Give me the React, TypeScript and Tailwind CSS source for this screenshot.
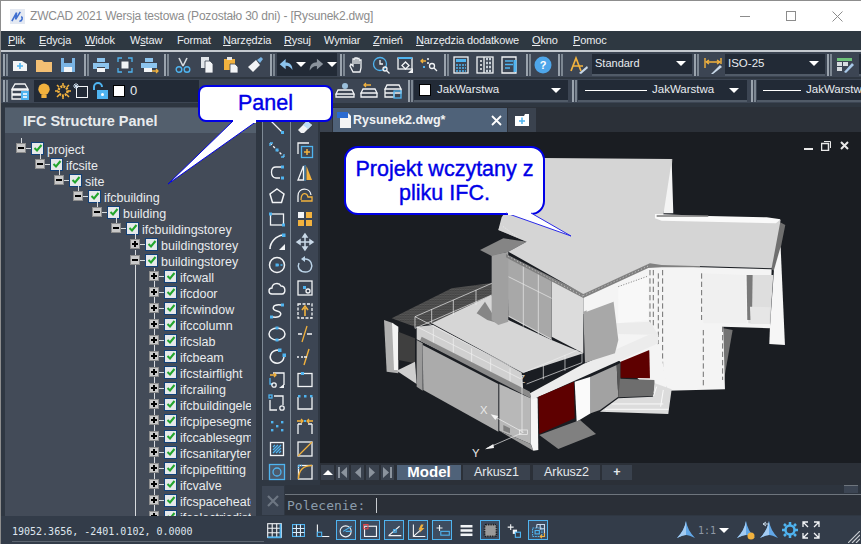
import React from 'react';

const W = '#f2f4f6';
const B = '#4fb4f0';
const O = '#f2b23e';

const Ic = ({ children, s = 20 }: { children: React.ReactNode; s?: number }) => (
  <svg viewBox="0 0 20 20" width={s} height={s} fill="none" stroke={W} strokeWidth="1.3">
    {children}
  </svg>
);

const Btn = ({ children, h = 'h-[25px]' }: { children: React.ReactNode; h?: string }) => (
  <div className={`w-[24px] ${h} flex items-center justify-center shrink-0`}>{children}</div>
);

const Grip = ({ className = '' }: { className?: string }) => (
  <div className={`w-[5px] h-[22px] shrink-0 flex justify-between ${className}`}>
    <div className="w-[2px] bg-[#9aa3ad]" />
    <div className="w-[2px] bg-[#7d8792]" />
  </div>
);

const Caret = () => (
  <div className="w-0 h-0 border-l-[5px] border-r-[5px] border-t-[5px] border-l-transparent border-r-transparent border-t-white" />
);

const Combo = ({ children, className }: { children: React.ReactNode; className: string }) => (
  <div className={`h-[22px] bg-[#222a36] border-b-2 border-[#515b68] flex items-center shrink-0 font-['Liberation_Sans',sans-serif] text-[11.5px] text-[#e8ecf0] ${className}`}>
    {children}
  </div>
);

const menu: [string, string, string, string][] = [
  ['', 'P', 'lik', 'w-[31px]'],
  ['', 'E', 'dycja', 'w-[46px]'],
  ['', 'W', 'idok', 'w-[45px]'],
  ['W', 's', 'taw', 'w-[47px]'],
  ['', '', 'Format', 'w-[46px]'],
  ['', 'N', 'arzędzia', 'w-[61px]'],
  ['', 'R', 'ysuj', 'w-[40px]'],
  ['', '', 'Wymiar', 'w-[49px]'],
  ['', 'Z', 'mień', 'w-[43px]'],
  ['', 'N', 'arzędzia dodatkowe', 'w-[116px]'],
  ['', 'O', 'kno', 'w-[41px]'],
  ['', 'P', 'omoc', 'w-[50px]'],
];

const tree: [string, number, boolean][] = [
  ['project', 0, false],
  ['ifcsite', 1, false],
  ['site', 2, false],
  ['ifcbuilding', 3, false],
  ['building', 4, false],
  ['ifcbuildingstorey', 5, false],
  ['buildingstorey', 6, true],
  ['buildingstorey', 6, false],
  ['ifcwall', 7, true],
  ['ifcdoor', 7, true],
  ['ifcwindow', 7, true],
  ['ifccolumn', 7, true],
  ['ifcslab', 7, true],
  ['ifcbeam', 7, true],
  ['ifcstairflight', 7, true],
  ['ifcrailing', 7, true],
  ['ifcbuildingelementproxy', 7, true],
  ['ifcpipesegment', 7, true],
  ['ifccablesegment', 7, true],
  ['ifcsanitaryterminal', 7, true],
  ['ifcpipefitting', 7, true],
  ['ifcvalve', 7, true],
  ['ifcspaceheater', 7, true],
  ['ifcelectricdistribution', 7, true],
];

const TreeRow = ({ name, level, plus, index }: { name: string; level: number; plus: boolean; index: number }) => (
  <div className="relative h-[16px] flex items-center whitespace-nowrap" style={{ paddingLeft: 11 + 19 * level }}>
    {level === 7 && <span className="absolute left-[130px] top-0 bottom-0 w-px bg-[#d8dbde]" />}
    {level === 7 && <span className="absolute left-[149px] top-0 bottom-0 w-px bg-[#d8dbde]" />}
    {index === 7 && <span className="absolute left-[130px] top-[8px] bottom-0 w-px bg-[#d8dbde]" />}
    {level < 7 && <span className="absolute top-[-2px] h-[5px] w-px bg-[#d8dbde]" style={{ left: 16 + 19 * level }} />}
    <span className="relative w-[10px] h-[10px] bg-[#c8c8c8] border border-[#8c8c8c] shrink-0 flex items-center justify-center">
      <span className="absolute w-[6px] h-[2px] bg-black" />
      {plus && <span className="absolute w-[2px] h-[6px] bg-black" />}
    </span>
    <span className="w-[5px] h-px bg-[#d8dbde] shrink-0" />
    <span className="w-[13px] h-[13px] bg-[#e6e8ea] border border-[#12427a] shrink-0 flex items-center justify-center">
      <svg viewBox="0 0 10 10" width="10" height="10" fill="none" stroke="#22a52c" strokeWidth="2">
        <path d="M1.5 5 L4 7.5 L8.5 2" />
      </svg>
    </span>
    <span className="ml-[3px] pt-[3px] text-[12.5px] text-[#e9ebee] font-['Liberation_Sans',sans-serif] leading-[16px]">{name}</span>
  </div>
);

const col1: React.ReactNode[] = [
  <><path d="M4 4 L15 15" /><rect x="14" y="14" width="3" height="3" fill={B} stroke="none" /></>,
  <><path d="M3 3 L17 17" strokeDasharray="2.5 2" /><path d="M3 3 h3 M3 3 v3 M17 17 h-3 M17 17 v-3" stroke={B} /><rect x="8.5" y="8.5" width="3" height="3" fill={B} stroke="none" /></>,
  <><path d="M15 4 H9 C3 4 3 14 9 15 H13" /><rect x="14" y="2.5" width="3" height="3" fill={B} stroke="none" /><rect x="14" y="13.5" width="3" height="3" fill={B} stroke="none" /></>,
  <path d="M10 3 L17 8 L14.5 16.5 H5.5 L3 8 Z" strokeWidth="1.5" />,
  <><rect x="3.5" y="5" width="13" height="11" /><rect x="2" y="3.5" width="3" height="3" fill={B} stroke="none" /><rect x="15" y="14.5" width="3" height="3" fill={B} stroke="none" /></>,
  <><path d="M3 17 C3 10 9 4 16 3" strokeWidth="1.6" /><rect x="15" y="1.5" width="3.5" height="3.5" fill={B} stroke="none" /><path d="M18 12 V18 H12 Z" fill={W} stroke="none" /></>,
  <><circle cx="10" cy="10" r="7.5" strokeWidth="1.5" /><path d="M10 10 H17" stroke={B} strokeDasharray="2 1.5" /><rect x="8.5" y="8.5" width="3" height="3" fill={B} stroke="none" /></>,
  <path d="M5 16 C1 16 1 10 5 10 C5 5 12 4 14 8 C19 8 19 16 15 16 Z" strokeWidth="1.4" />,
  <><path d="M14 4 C5 3 4 9 10 10 C16 11 15 17 6 16" strokeWidth="1.5" /><rect x="14" y="2.5" width="3" height="3" fill={B} stroke="none" /><rect x="3" y="14.5" width="3" height="3" fill={B} stroke="none" /></>,
  <><ellipse cx="10" cy="10" rx="8" ry="6" strokeWidth="1.5" /><rect x="8.5" y="2.5" width="3" height="3" fill={B} stroke="none" /><rect x="8.5" y="14.5" width="3" height="3" fill={B} stroke="none" /></>,
  <><path d="M12 3 C3 3 1 11 6 15 C11 18 17 15 17 9" strokeWidth="1.5" /><rect x="11" y="1.5" width="3.5" height="3.5" fill={B} stroke="none" /><rect x="15.5" y="6.5" width="3.5" height="3.5" fill={B} stroke="none" /></>,
  <><path d="M6 3 H17 V15" /><path d="M3 8 V14 H6" stroke={B} /><path d="M3 5 H9 M7 3 L9 5 L7 7" stroke={O} /><circle cx="7" cy="15" r="2.2" /><path d="M17 14 V18 H12 Z" fill={W} stroke="none" /></>,
  <><path d="M3 7 V17 H10 M7 3 H16 V12" /><rect x="2" y="2" width="3" height="3" stroke={B} /><circle cx="15" cy="15" r="2.2" /></>,
  <g fill={B} stroke="none"><rect x="4" y="5" width="2.4" height="2.4" /><rect x="9" y="9" width="2.4" height="2.4" /><rect x="14" y="5" width="2.4" height="2.4" /><rect x="4" y="13" width="2.4" height="2.4" /><rect x="14" y="13" width="2.4" height="2.4" /></g>,
  <><rect x="3.5" y="3.5" width="13" height="13" /><path d="M6 14 L14 6 M6 11 L11 6 M9 14 L14 9" stroke={B} strokeWidth="1.4" /><path d="M6 8 L8 6 M12 14 L14 12" stroke={B} /></>,
  <><rect x="2.5" y="2.5" width="15" height="15" stroke={B} fill="#4c5a6c" /><circle cx="10" cy="10" r="4" stroke={B} /></>,
];

const col2: React.ReactNode[] = [
  <><path d="M3 13 L12 4 L17 8 L9 16 H6 Z" fill={W} stroke="none" /><path d="M12 4 L17 8 L13 12 L8 8 Z" fill="#bcdcf4" stroke="none" /></>,
  <><path d="M3 14 V3 H14" /><rect x="6.5" y="6.5" width="11" height="11" stroke={B} /><path d="M12 9 V15 M9 12 H15" stroke={O} strokeWidth="1.5" /></>,
  <><path d="M8.5 3 V17 H3 Z" /><path d="M11.5 3 V17 H17 Z" fill={O} stroke="none" /><path d="M10 2 V18" stroke={B} strokeWidth="0.8" /></>,
  <><path d="M3 16 V10 C3 1 15 1 16 9" /><path d="M6 14 C6 6 12 6 13 11 H17 V15 H6" stroke={O} /></>,
  <g stroke="none"><rect x="3" y="3" width="6" height="6" fill={W} /><rect x="11" y="3" width="6" height="6" fill={O} /><rect x="3" y="11" width="6" height="6" fill={O} /><rect x="11" y="11" width="6" height="6" fill={O} /></g>,
  <path d="M10 2 V18 M2 10 H18 M10 2 L8 5 H12 Z M10 18 L8 15 H12 Z M2 10 L5 8 V12 Z M18 10 L15 8 V12 Z" strokeWidth="1.5" stroke="#c9d9e8" fill="#c9d9e8" />,
  <><path d="M10 4 C16 4 18 10 16 14 C14 18 7 18 4 14 C3 12 3 10 4 8" stroke="#bcd4e8" strokeWidth="1.5" /><path d="M10 1 L6 4 L10 7 Z" fill="#bcd4e8" stroke="none" /></>,
  <><rect x="3" y="3" width="14" height="14" /><rect x="8" y="8" width="3" height="3" fill={B} stroke="none" /><circle cx="13" cy="13" r="2" /></>,
  <><rect x="3" y="3" width="14" height="14" strokeDasharray="3 1.5" /><path d="M10 15 V7 M7 9 L10 5 L13 9" stroke={O} strokeWidth="1.6" /></>,
  <><path d="M12 2 L7 18" stroke={O} strokeWidth="1.3" /><path d="M3 10 H7 M12 10 H17" stroke={W} /></>,
  <><path d="M14 2 L9 18" stroke={O} strokeWidth="1.4" /><path d="M2 10 H4 M6 10 H8 M9 10 H12" stroke={W} /></>,
  <><rect x="3" y="3.5" width="14" height="13" /><rect x="6" y="2" width="3" height="3" fill={B} stroke="none" /></>,
  <><path d="M3 4 V16 H17 V4" /><g fill={B} stroke="none"><rect x="3" y="2" width="2.5" height="2.5" /><rect x="9" y="2" width="2.5" height="2.5" /><rect x="15" y="2" width="2.5" height="2.5" /></g></>,
  <><path d="M3 18 V8 M17 18 V8 M3 8 H7 M13 8 H17" /><path d="M2 5 H8 M6 3 L8 5 L6 7 M18 5 H12 M14 3 L12 5 L14 7" stroke={O} /><rect x="9" y="4" width="2" height="2" fill={B} stroke="none" /></>,
  <><rect x="3" y="3" width="14" height="14" /><path d="M3 17 L17 3" stroke={O} strokeWidth="1.3" /></>,
  <><rect x="3.5" y="3.5" width="13.5" height="13.5" /><path d="M3.5 17 C3.5 8 9 3.5 17 3.5" stroke={O} strokeWidth="1.5" fill="#3f4855" /><path d="M3.5 3.5 H7 M3.5 3.5 V7" stroke={B} strokeDasharray="1.5 1" /></>,
];

const status: [React.ReactNode, boolean][] = [
  [<><rect x="2" y="2" width="16" height="16" stroke={W} /><path d="M2 7.3 H18 M2 12.6 H18 M7.3 2 V18 M12.6 2 V18" /><path d="M17 2 V18 H2" stroke={B} strokeWidth="2" /></>, false],
  [<g stroke={B}><rect x="3" y="3" width="14" height="14" /><path d="M3 7.6 H17 M3 12.3 H17 M7.6 3 V17 M12.3 3 V17" stroke="#d8ecfa" /></g>, false],
  [<><path d="M4 3 V17 H18" /><rect x="4" y="12" width="5" height="5" stroke={B} /></>, false],
  [<><circle cx="9" cy="11" r="6.5" /><path d="M6 11 L16 5 M9 11 H16" stroke={B} /></>, true],
  [<><rect x="3" y="5" width="14" height="12" /><rect x="2" y="3" width="5" height="5" stroke="#e0454b" /></>, true],
  [<><path d="M3 16 L16 5 M3 16 H18" /><rect x="9" y="9" width="3" height="3" stroke={B} /></>, true],
  [<><path d="M4 3 V17 H18 M4 17 L13 9" /><path d="M13 3 L10 9 H13 L11 13 L17 7 H14 L16 3 Z" fill={O} stroke="none" /></>, true],
  [<><path d="M3 7 H10 M6.5 3.5 V10.5" /><rect x="8" y="11" width="10" height="4.5" stroke={B} /></>, true],
  [<g stroke="none" fill={W}><rect x="3" y="3.5" width="14" height="3" /><rect x="3" y="8.5" width="14" height="3" /><rect x="3" y="13.5" width="14" height="3" /></g>, false],
  [<><rect x="3" y="3" width="14" height="14" rx="2" fill="#9a9a9a" stroke="#111" strokeDasharray="1 1" strokeWidth="2" /></>, true],
  [<><path d="M2 6 H9 M5.5 2.5 V9.5" /><rect x="8" y="9" width="5" height="5" fill={W} stroke="none" /><rect x="11" y="12" width="6" height="6" stroke={B} fill="#333c49" /></>, false],
  [<><g stroke={B}><rect x="3" y="7" width="11" height="10" strokeDasharray="2 1" /><rect x="6" y="10" width="5" height="4" /></g><path d="M8 3 H17 V14 M8 7 V3 M12 3 V9 M17 8 H12" stroke="#c8dcf0" /><path d="M17 13 V17 H12 M14 15 L12 17 L14 19" stroke={O} /></>, true],
];

const Anno = ({ badge }: { badge?: React.ReactNode }) => (
  <svg viewBox="0 0 20 20" width="20" height="20">
    <path d="M10 1 C11 7 14 13 19 18 C15 16 12 15 10 15 C8 15 5 16 1 18 C6 13 9 7 10 1 Z" fill="#62a8e8" />
    <path d="M10 1 V15 C8 15 5 16 1 18 C6 13 9 7 10 1 Z" fill="#a4ccf2" />
    {badge}
  </svg>
);

const Building = () => (
  <svg viewBox="320 132 541 331" className="w-full h-full block">
    <defs>
      <pattern id="hatch" width="5" height="5" patternUnits="userSpaceOnUse">
        <rect width="5" height="5" fill="#3a3a3a" />
        <path d="M0 4 L5 2" stroke="#777" strokeWidth="1.5" />
      </pattern>
    </defs>
    <g transform="translate(370 180) scale(0.3333)">
      {/* dach */}
      <polygon points="895,-60 908,-63 890,85 875,85" fill="#757575" />
      <polygon points="885,-20 905,-60 910,100 880,100" fill="#f4f4f4" />
      <polygon points="875,-10 895,-60 880,90 866,90" fill="#777" />
      <polygon points="1218,120 1246,135 1218,275 1205,268" fill="#6f6f6f" />
      {/* prawa czesc */}
      <polygon points="1212,270 1232,200 1245,495 1198,492 1200,440" fill="#f6f6f6" />
      <polygon points="1060,445 1088,450 1062,600 1055,600" fill="#737373" />
      <polygon points="640,350 840,255 870,255 890,632 850,640 735,530 640,400" fill="#f4f4f4" />
      <polygon points="865,258 1205,268 1200,445 1060,440 1065,628 890,632 870,470" fill="#f4f4f4" />
      <polygon points="1135,285 1210,285 1200,432 1135,430" fill="#dedede" />
      <polygon points="1130,285 1148,285 1146,420 1132,420" fill="#7a7a7a" />
      <polygon points="995,280 1125,285 1130,430 1000,430" fill="#f0f0f0" />
      <polygon points="1140,380 1200,382 1198,432 1142,432" fill="#e6e6e6" />
      <path d="M995 280 V420 M865 280 V620 M878 270 V630 M1000 450 V620 M1058 440 V600 M840 270 V470 M850 270 V460" stroke="#555" strokeWidth="2.5" strokeDasharray="16 9" />
      <polygon points="745,320 835,290 835,420 745,430" fill="#f8f8f8" />
      <polygon points="735,430 840,425 865,465 745,462" fill="#ebebeb" />
      <path d="M745 320 L835 288" stroke="#444" strokeWidth="2" strokeDasharray="3 5" />
      {/* tarasy i tyl */}
      <polygon points="65,415 245,325 370,308 370,360 190,430 135,440" fill="url(#hatch)" />
      {/* lewa */}
      <polygon points="42,420 70,430 85,580 50,575" fill="#b0b0b0" />
      <polygon points="66,428 85,440 85,570 72,570" fill="#f4f4f4" />
      <polygon points="85,455 135,475 135,550 85,540" fill="#3f3f3f" />
      <polygon points="80,572 135,545 140,612" fill="#cfcfcf" />
      <polygon points="140,480 158,490 158,632 140,620" fill="#999" />
      {/* taras */}
      <polygon points="185,430 365,345 385,430 415,420 545,480 640,520 460,578" fill="#d6d6d6" />
      <polygon points="140,440 190,435 455,578 460,632 140,478" fill="#d0d0d0" />
      <path d="M140 440 L455 598 M190 445 V495 M250 475 V525 M305 505 V555 M362 535 V585 M420 565 V610" stroke="#f2f2f2" strokeWidth="2" fill="none" />
      <path d="M460 578 L636 505 V548 L470 612 M520 555 V598 M585 525 V572" stroke="#eee" strokeWidth="2" fill="none" />
      <path d="M135 410 L370 308 M135 410 L460 578 M135 410 V445 M185 388 V430 M250 360 V405 M318 330 V375 M135 445 L365 345" stroke="#f2f2f2" strokeWidth="2" fill="none" />
      <polygon points="150,482 155,470 480,635 482,655" fill="#8a8a8a" />
      {/* parter */}
      <polygon points="158,495 385,612 385,755 160,630" fill="#ababab" />
      <polygon points="388,612 482,655 482,792 388,752" fill="#b8b8b8" />
      <polygon points="400,735 420,745 420,760 400,752" fill="#808080" />
      <polygon points="388,752 482,792 490,812 400,760" fill="#9a9a9a" />
      <polygon points="482,650 503,655 505,810 490,812 482,790" fill="#f6f6f6" />
      <polygon points="480,640 640,552 835,465 865,465 865,490 485,660" fill="#ececec" />
      <polygon points="505,650 612,605 614,715 508,762" fill="#5e0000" />
      <polygon points="614,605 662,590 662,700 620,725" fill="#fafafa" />
      <polygon points="662,590 740,555 745,650 690,690 662,700" fill="#a2a2a2" />
      <polygon points="740,555 752,548 752,650 745,652" fill="#555" />
      <polygon points="752,545 838,510 840,595 752,593" fill="#5e0000" />
      <polygon points="750,596 855,600 850,648 745,652" fill="#6e6e6e" />
      <polygon points="838,505 870,490 890,630 855,612" fill="#f4f4f4" />
      <polygon points="690,695 745,655 850,650 855,610 905,628 895,702" fill="#dcdcdc" />
      <path d="M725 672 H880 M705 688 H895 M860 620 L850 650 M880 630 L872 680" stroke="#fafafa" strokeWidth="3" />
      <polygon points="508,765 630,720 678,762 565,807" fill="#808080" />
      {/* gorne pietro */}
      <polygon points="545,295 640,345 640,520 545,470" fill="#dcdcdc" />
      <polygon points="412,225 545,298 545,480 415,410" fill="#a8a8a8" />
      <path d="M460 252 V440 M505 276 V462 M415 290 L545 355 M415 408 L545 478" stroke="#ececec" strokeWidth="2" />
      <polygon points="640,395 730,358 745,480 735,520 645,548" fill="#a8a8a8" />
      <polygon points="650,365 735,330 745,360 650,395" fill="#f4f4f4" />
      <polygon points="320,400 345,365 385,430 352,420" fill="#868686" />
      <polygon points="365,225 415,215 415,425 385,435 365,420" fill="#a0a0a0" />
      <polygon points="330,210 400,175 470,185 415,215 365,228" fill="#858585" />
      <polygon points="385,150 400,110 420,115 470,185" fill="#8a8a8a" />
      {/* dach glowny */}
      <polygon points="408,222 640,340 840,248 990,252 990,262 875,262 835,264 640,354 408,232" fill="#808080" />
      <polygon points="395,112 519,-66 906,-63 880,105 1232,120 1205,265 875,255 840,250 640,342 415,215 470,185 385,150" fill="#d5d5d5" />
      <polygon points="855,102 1015,108 1190,112 1232,118 1218,130 1015,125 875,122 855,115" fill="#fafafa" />
      <path d="M860 108 H1015" stroke="#777" strokeWidth="5" />
      <path d="M415 229 L640 349 M640 347 L835 258" stroke="#eee" strokeWidth="2" strokeDasharray="3 7" />
      <path d="M400 140 L440 170" stroke="#eee" strokeWidth="3" strokeDasharray="3 5" />
      {/* uklad wspolrzednych */}
      <g stroke="#f4f4f4" strokeWidth="2" fill="none">
        <path d="M456 585 V755" />
        <path d="M460 757 L370 708" />
        <path d="M460 757 L350 805" />
        <rect x="448" y="750" width="24" height="14" />
      </g>
      <polygon points="362,703 385,708 376,720" fill="#f4f4f4" />
      <polygon points="345,808 370,792 372,804" fill="#f4f4f4" />
      <text x="330" y="702" fontSize="34" fill="#e8e8e8" fontFamily="Liberation Sans, sans-serif">X</text>
      <text x="306" y="832" fontSize="34" fill="#e8e8e8" fontFamily="Liberation Sans, sans-serif">Y</text>
      <text x="445" y="610" fontSize="34" fill="#cfcfcf" fontFamily="Liberation Sans, sans-serif">Z</text>
    </g>
  </svg>
);

export default function App() {
  return (
    <div className="relative w-[861px] h-[544px] overflow-hidden flex flex-col border-t border-l border-[#8d8d8d] bg-[#2e3640] font-['Liberation_Sans',sans-serif]">
      {/* pasek tytulu */}
      <div className="h-[30px] bg-white flex items-center shrink-0">
        <div className="w-[15px] h-[15px] ml-[9px] bg-[#e4e9f2] flex items-center justify-center">
          <svg viewBox="0 0 16 16" width="15" height="15" fill="none" stroke="#3f6fd0" strokeWidth="1.7">
            <path d="M2 13 L7 4 L6 11 L11 3 M10 13 C13 13 14 9 12 8" />
          </svg>
        </div>
        <div className="ml-[5px] text-[12px] tracking-[-0.2px] text-[#8c8c8c] whitespace-nowrap">ZWCAD 2021 Wersja testowa (Pozostało 30 dni) - [Rysunek2.dwg]</div>
        <div className="ml-auto flex items-center text-[#8c8c8c]">
          <div className="w-[46px] flex justify-center"><div className="w-[10px] h-px bg-[#8c8c8c]" /></div>
          <div className="w-[46px] flex justify-center"><div className="w-[10px] h-[10px] border border-[#8c8c8c]" /></div>
          <div className="w-[46px] mr-[1px] flex justify-center">
            <svg width="11" height="11" viewBox="0 0 11 11" stroke="#8c8c8c"><path d="M0.5 0.5 L10.5 10.5 M10.5 0.5 L0.5 10.5" /></svg>
          </div>
        </div>
      </div>

      {/* menu */}
      <div className="h-[19px] bg-[#2e3841] flex items-center pl-[7px] shrink-0 text-[11px] tracking-[-0.15px] text-[#eceff2] whitespace-nowrap">
        {menu.map(([a, u, r, w], i) => (
          <div key={i} className={`${w} shrink-0`}>
            {a}
            {u && <span className="underline">{u}</span>}
            {r}
          </div>
        ))}
      </div>
      <div className="h-[2px] bg-[#c5cad0] shrink-0" />

      {/* pasek narzedzi 1 */}
      <div className="h-[25px] bg-[#3c4553] flex items-center pl-[2px] shrink-0 overflow-hidden">
        <Grip />
        <Btn><Ic><path d="M3 6 H12 L17 9 V16 H3 Z" fill={W} stroke="none" /><path d="M10 8 V14 M7 11 H13" stroke={B} strokeWidth="1.6" /></Ic></Btn>
        <Btn><Ic><path d="M2 5 H8 L10 7 H18 V17 H2 Z" fill="#f3bf74" stroke="none" /></Ic></Btn>
        <Btn><Ic><path d="M3 3 H17 V17 H3 Z" fill="#7ab4e4" stroke="none" /><rect x="6" y="3" width="8" height="5" fill="#3c4553" stroke="none" /><rect x="6" y="12" width="8" height="5" fill={W} stroke="none" /></Ic></Btn>
        <Grip className="ml-[4px]" />
        <Btn><Ic><path d="M6 3 H14 V7 H6 Z" fill="#8cc4ee" stroke="none" /><path d="M2 8 H18 V14 H14 V12 H6 V14 H2 Z" fill="#8cc4ee" stroke="none" /><rect x="6" y="13" width="8" height="4" fill={W} stroke="none" /></Ic></Btn>
        <Btn><Ic><path d="M3 7 V3 H7 M13 3 H17 V7 M17 13 V17 H13 M7 17 H3 V13" stroke={B} /><rect x="6.5" y="6.5" width="7" height="7" fill={W} stroke="none" /></Ic></Btn>
        <Btn><Ic><path d="M6 3 H14 V7 H6 Z" fill="#8cc4ee" stroke="none" /><path d="M2 8 H18 V13 H2 Z" fill="#8cc4ee" stroke="none" /><rect x="5" y="13" width="8" height="4" fill={W} stroke="none" /><path d="M13 16 H19 M17 14 L19 16 L17 18" stroke={O} /></Ic></Btn>
        <Grip className="ml-[3px]" />
        <div className="ml-[2px] flex">
          <Btn><Ic><path d="M6 3 L10 11 M14 3 L10 11" stroke="#d9dde1" strokeWidth="1.6" /><circle cx="6" cy="14.5" r="2.8" stroke={B} strokeWidth="1.4" /><circle cx="14" cy="14.5" r="2.8" stroke={B} strokeWidth="1.4" /></Ic></Btn>
          <Btn><Ic><rect x="4" y="2" width="8" height="11" fill="#e0e4e8" stroke="none" /><path d="M8 6 H13 L16 9 V18 H8 Z" fill={W} stroke="#3c4553" strokeWidth="0.8" /></Ic></Btn>
          <Btn><Ic><path d="M3 4 H14 V15 H3 Z" fill={O} stroke="none" /><rect x="6" y="2" width="5" height="3" fill="#e8e8e8" stroke="none" /><path d="M9 9 H14 L17 12 V18 H9 Z" fill={W} stroke="#3c4553" strokeWidth="0.8" /></Ic></Btn>
          <Btn><Ic><path d="M3 12 L11 5 L15 10 L8 17 Z" fill={W} stroke="none" /><path d="M12 5 L16 2 L18 4 L15 8 Z" fill="#7ab4e4" stroke="none" /></Ic></Btn>
        </div>
        <Grip className="ml-[3px]" />
        <div className="ml-[2px] w-[60px] h-[23px] bg-[#222a36] flex items-center pl-[1px] shrink-0">
          <Ic s={18}><path d="M9 3 L2 9 L9 15 V11 C13 11 15 13 17 16 C17 10 14 7 9 7 Z" fill="#8cc4ee" stroke="none" /></Ic>
          <div className="ml-[1px]"><Caret /></div>
          <div className="ml-[1px]"><Ic s={18}><path d="M11 3 L18 9 L11 15 V11 C7 11 5 13 3 16 C3 10 6 7 11 7 Z" fill="#8a929c" stroke="none" /></Ic></div>
          <div className="ml-[2px]"><Caret /></div>
        </div>
        <Grip className="ml-[3px]" />
        <Btn><Ic><path d="M6 17 L3 11 L4 9 L6 11 V4 H8 V9 V3 H10 V9 V3.5 H12 V9 V5 H14 V13 L13 17 Z" /></Ic></Btn>
        <Btn><Ic><circle cx="9" cy="9" r="6.5" stroke={B} /><path d="M9 5 V9 H12" /><circle cx="14" cy="14" r="2" /><path d="M15.5 15.5 L18.5 18.5" /></Ic></Btn>
        <Btn><Ic><rect x="3" y="3" width="14" height="11" /><path d="M3 3 H17" stroke={B} strokeWidth="2" /><rect x="8" y="8" width="5" height="5" transform="rotate(45 10.5 10.5)" /><path d="M18 13 V18 H13 Z" fill={W} stroke="none" /></Ic></Btn>
        <Btn><Ic><path d="M2 6 H7 M4 4 L2 6 L4 8" stroke={O} /><path d="M8 4 H10 M8 8 H10" stroke={W} /><circle cx="13" cy="11" r="2.5" /><path d="M15 13 L18 16" /><rect x="4" y="11" width="2" height="2" fill={B} stroke="none" /></Ic></Btn>
        <Grip className="ml-[3px]" />
        <Btn><Ic><rect x="3" y="2" width="14" height="16" /><rect x="5" y="4" width="10" height="3" fill={B} stroke="none" /><path d="M5 10 H15 M5 13 H15 M5 16 H15" strokeDasharray="2 1" stroke={B} /></Ic></Btn>
        <Btn><Ic><rect x="2" y="2" width="16" height="16" /><path d="M9 2 V18 M5 6 H7 M5 10 H7 M5 14 H7" /><path d="M11 4 H16 M11 8 H16 M11 12 H16 M11 16 H16" stroke="#c8d0d8" strokeWidth="2.5" strokeDasharray="2 1" /></Ic></Btn>
        <Btn><Ic><path d="M3 2 H17 V18 H3 Z" /><path d="M6 6 H14 M6 9.5 H14 M6 13 H11" stroke={B} /><rect x="14.5" y="5" width="3" height="12" fill={B} stroke="none" /></Ic></Btn>
        <Grip className="ml-[5px]" />
        <Btn><svg width="18" height="18" viewBox="0 0 18 18"><circle cx="9" cy="9" r="8.5" fill="#4ea6ea" /><text x="9" y="13" textAnchor="middle" fontSize="11" fontWeight="700" fill="#fff" fontFamily="Liberation Sans, sans-serif">?</text></svg></Btn>
        <Grip className="ml-[3px]" />
        <div className="ml-[4px]"><Btn><Ic><path d="M2 16 L7 3 L12 16 M4 11 H14" stroke={O} strokeWidth="1.7" /><path d="M10 18 L18 11 L19 13 L12 19 Z" fill="#c8d8e8" stroke="none" /></Ic></Btn></div>
        <Combo className="ml-[1px] w-[100px] pl-[3px] justify-between pr-[6px]"><span className="text-[11px]">Standard</span><Caret /></Combo>
        <Grip className="ml-[2px]" />
        <div className="ml-[2px]"><Btn><Ic><path d="M2 3 V13 M18 3 V9 M3 7 H17 M3 7 L6 5 M3 7 L6 9 M17 7 L14 5 M17 7 L14 9" stroke={O} strokeWidth="1.4" /><path d="M8 19 L17 10 L19 12 L10 19 Z" fill="#c8d8e8" stroke="none" /></Ic></Btn></div>
        <Combo className="w-[100px] pl-[3px] justify-between pr-[6px]"><span>ISO-25</span><Caret /></Combo>
        <Grip className="ml-[2px]" />
        <div className="ml-[1px]"><Btn><Ic><rect x="2" y="3" width="15" height="3" fill="#6fc27a" stroke="none" /><path d="M2 7 H7 V11 H2 Z M8 7 H13 V11 H8 Z M2 12 H7 V16 H2 Z" fill="#d8dce0" stroke="none" /><path d="M9 17 L17 8 L19 10 L11 18 Z" fill="#a8c8e8" stroke="none" /></Ic></Btn></div>
        <Combo className="ml-[2px] w-[10px]"><span /></Combo>
      </div>
      <div className="h-[2px] bg-[#2e3640] shrink-0" />

      {/* pasek narzedzi 2 */}
      <div className="h-[24px] bg-[#3c4553] flex items-center pl-[2px] shrink-0 overflow-hidden">
        <Grip />
        <Btn h="h-[24px]"><Ic><path d="M5 3 H15 L18 8 H2 Z M2 9 H18 V13 H2 Z M2 14 H12 V18 H2 Z" fill="none" /><rect x="11" y="10" width="8" height="9" fill={B} stroke="none" /><path d="M13 13 H17 M13 16 H17" stroke="#fff" /></Ic></Btn>
        <div className="ml-[2px] w-[165px] h-[22px] bg-[#222a36] flex items-center shrink-0 text-[12px] text-[#e8ecf0]">
          <div className="w-[20px] flex justify-center"><svg width="14" height="16" viewBox="0 0 16 18"><circle cx="8" cy="7" r="6.5" fill="#f2b23e" /><rect x="5" y="13" width="6" height="4" fill="#f2b23e" /></svg></div>
          <div className="w-[18px] flex justify-center"><svg width="16" height="16" viewBox="0 0 16 16"><circle cx="8" cy="8" r="4.5" fill="none" stroke="#f2b23e" strokeWidth="2.5" strokeDasharray="2 1" /><path d="M8 0 V3 M8 13 V16 M0 8 H3 M13 8 H16 M2 2 L4 4 M12 12 L14 14 M2 14 L4 12 M12 4 L14 2" stroke="#f2b23e" strokeWidth="1.5" /></svg></div>
          <div className="w-[18px] flex justify-center"><svg width="16" height="16" viewBox="0 0 16 16" fill="none" stroke="#f2f4f6"><rect x="3.5" y="3.5" width="11" height="11" /><path d="M0 3 H6 M3 0 V6 M1 1 L5 5 M5 1 L1 5" stroke="#c8d8e8" /></svg></div>
          <div className="w-[22px] flex justify-center"><svg width="16" height="18" viewBox="0 0 16 18"><path d="M1 8 V5 A4 4 0 0 1 9 5" fill="none" stroke="#4fb4f0" strokeWidth="2" /><rect x="4" y="8" width="11" height="9" fill="#4fb4f0" /><circle cx="9.5" cy="12.5" r="1.5" fill="#fff" /></svg></div>
          <div className="w-[12px] h-[12px] bg-white border border-black ml-[1px]" />
          <div className="ml-[5px] text-[13px]">0</div>
        </div>
        <div className="ml-[134px]"><Btn h="h-[24px]"><Ic><circle cx="10" cy="5" r="3" fill="#9cc0dc" stroke="none" /><path d="M3 9 H17 L19 13 H1 Z M1 13 H19 V16 H1 Z" /></Ic></Btn></div>
        <Btn h="h-[24px]"><Ic><path d="M4 8 H16 L18 12 H2 Z M2 12 H18 V16 H2 Z" /><path d="M5 4 H12 M7 2 L5 4 L7 6" stroke={O} /></Ic></Btn>
        <Btn h="h-[24px]"><Ic><path d="M4 4 H16 L18 8 H2 Z M2 8 H18 V12 H2 Z M2 12 H11 V16 H2 Z" /><rect x="11" y="10" width="7" height="7" stroke={B} /></Ic></Btn>
        <Grip className="ml-[3px]" />
        <Combo className="w-[154px] pl-[5px] pr-[7px] justify-between ml-[1px]">
          <span className="flex items-center"><span className="w-[12px] h-[12px] bg-white border border-black mr-[6px]" />JakWarstwa</span><Caret />
        </Combo>
        <Grip className="ml-[4px]" />
        <Combo className="w-[169px] ml-[1px] pl-[7px] pr-[8px] justify-between">
          <span className="flex items-center"><span className="w-[62px] h-px bg-white mr-[5px]" />JakWarstwa</span><Caret />
        </Combo>
        <Grip className="ml-[4px]" />
        <Combo className="w-[110px] ml-[1px] pl-[6px]">
          <span className="flex items-center whitespace-nowrap"><span className="w-[38px] h-px bg-white mr-[5px]" />JakWarstwa</span>
        </Combo>
      </div>
      <div className="h-[4px] bg-[#2e3640] shrink-0" />

      {/* srodek */}
      <div className="flex flex-1 min-h-0 bg-[#2f3742]">
        {/* panel IFC */}
        <div className="ml-[4px] w-[251px] shrink-0 bg-[#434b58] overflow-hidden flex flex-col">
          <div className="h-[25px] mt-px pt-[2px] bg-[#535f6d] shrink-0 flex items-center pl-[18px] font-bold text-[14.5px] text-[#e8ebee]">
            IFC Structure Panel
          </div>
          <div className="pt-[7px] w-[246px] overflow-hidden">
            {tree.map(([n, l, p], i) => (
              <TreeRow key={i} index={i} name={n} level={l} plus={p} />
            ))}
          </div>
        </div>

        <div className="ml-[6px] flex-1 min-w-0 flex flex-col">
          <div className="flex flex-1 min-h-0">
            {/* narzedzia rysowania */}
            <div className="w-[56px] h-[373px] flex shrink-0 bg-[#3c4553]">
              {[col1, col2].map((col, c) => (
                <div key={c} className="w-[28px] pt-[8px] border-l border-[#7f8a96] flex flex-col items-center">
                  {col.map((ic, i) => (
                    <div key={i} className="h-[23px] flex items-center justify-center shrink-0"><Ic>{ic}</Ic></div>
                  ))}
                </div>
              ))}
            </div>
            {/* obszar rysunku */}
            <div className="ml-[2px] flex-1 min-w-0 flex flex-col bg-[#2b3038]">
              <div className="h-[24px] mt-px flex shrink-0 bg-[#2b3038]">
                <div className="w-[12px] bg-[#3a424e]" />
                <div className="ml-px w-[174px] bg-[#4f6279] flex items-center pl-[4px] text-[12.5px] font-bold text-[#f0f2f4]">
                  <svg width="16" height="18" viewBox="0 0 16 18"><path d="M3 2 H11 L14 5 V17 H3 Z" fill="#f4f4f4" /><rect x="0" y="1" width="11" height="6" fill="#2a6ad0" /></svg>
                  <span>Rysunek2.dwg*</span>
                  <svg className="ml-auto mr-[5px]" width="11" height="11" viewBox="0 0 11 11" stroke="#fff" strokeWidth="1.8"><path d="M1 1 L10 10 M10 1 L1 10" /></svg>
                </div>
                <div className="ml-px w-[28px] bg-[#3a424e] flex items-center justify-center">
                  <svg width="16" height="14" viewBox="0 0 16 14"><path d="M1 3 H10 L11 1 H15 V13 H1 Z" fill="#fff" /><path d="M8 4.5 V11 M5 8 H11" stroke="#4fb4f0" strokeWidth="1.5" /></svg>
                </div>
              </div>
              <div className="relative h-[331px] bg-[#1a1d22] shrink-0">
                <Building />
                <div className="absolute top-[8px] right-[11px] flex items-center gap-[8px]">
                  <span className="w-[9px] h-[2px] mt-[6px] bg-[#e8e8e8]" />
                  <svg width="10" height="10" viewBox="0 0 10 10" fill="none" stroke="#e8e8e8"><rect x="0.5" y="2.5" width="7" height="7" strokeWidth="1.5" /><path d="M3 0.5 H9.5 V7" /></svg>
                  <svg width="11" height="11" viewBox="0 0 11 11" stroke="#e8e8e8" strokeWidth="2"><path d="M2 2 L9 9 M9 2 L2 9" /></svg>
                </div>
              </div>
              <div className="h-[17px] pt-[2px] flex items-start pl-px text-[12.5px] text-[#e4e8ec]">
                <div className="w-[13px] h-[15px] bg-[#3a424e] flex items-center justify-center"><div className="w-0 h-0 border-l-[5px] border-r-[5px] border-b-[5px] border-l-transparent border-r-transparent border-b-white" /></div>
                {[0, 1, 2, 3].map(n => (
                  <div key={n} className="ml-[2px] w-[13px] h-[15px] bg-[#3a424e] flex items-center justify-center">
                    <svg width="9" height="11" viewBox="0 0 9 11" fill="#8b939d">
                      {n === 0 && <path d="M0 0 H2 V11 H0 Z M9 0 V11 L3 5.5 Z" />}
                      {n === 1 && <path d="M8 0 V11 L2 5.5 Z" />}
                      {n === 2 && <path d="M1 0 V11 L7 5.5 Z" />}
                      {n === 3 && <path d="M7 0 H9 V11 H7 Z M0 0 V11 L6 5.5 Z" />}
                    </svg>
                  </div>
                ))}
                <div className="ml-[3px] w-[64px] h-[15px] bg-[#4f6279] flex items-center justify-center font-bold text-[15px] text-white">Model</div>
                <div className="ml-[2px] w-[67px] h-[15px] bg-[#3a424e] flex items-center justify-center">Arkusz1</div>
                <div className="ml-[3px] w-[67px] h-[15px] bg-[#3a424e] flex items-center justify-center">Arkusz2</div>
                <div className="ml-[2px] w-[30px] h-[15px] bg-[#3a424e] flex items-center justify-center font-bold">+</div>
              </div>
            </div>
          </div>
          {/* linia polecen */}
          <div className="h-[30px] mb-[1px] flex shrink-0">
            <div className="w-[22px] mt-[1px] bg-[#3c4553] flex items-center justify-center">
              <svg width="12" height="12" viewBox="0 0 12 12" stroke="#6d7682" strokeWidth="2.2"><path d="M1 1 L11 11 M11 1 L1 11" /></svg>
            </div>
            <div className="ml-px flex-1 flex flex-col">
              <div className="h-[10px] bg-[#2d343e] border-b border-[#6e757d] flex justify-end pr-[3px]">
                <div className="w-[14px] h-[8px] bg-[#3c4553] border-t border-[#6e757d]" />
              </div>
              <div className="flex-1 bg-[#2a2f37] flex items-center pl-[2px] font-['DejaVu_Sans_Mono',monospace] text-[13px] text-[#8b9cab] leading-none">
                Polecenie:
                <span className="ml-[11px] w-px h-[15px] bg-[#c8ccd0]" />
              </div>
            </div>
          </div>
        </div>
      </div>

      {/* pasek stanu */}
      <div className="h-[28px] bg-[#333c49] flex items-center shrink-0 relative">
        <div className="w-[252px] ml-[11px] pt-[3px] border-b border-[#5c6570] h-[24px] flex items-center font-['DejaVu_Sans_Mono',monospace] text-[10px] text-[#dfe6ee] whitespace-pre shrink-0">19052.3656, -2401.0102, 0.0000</div>
        <div className="flex items-center">
          {status.map(([ic, on], i) => (
            <div key={i} className={`w-[20px] h-[20px] mr-[4px] flex items-center justify-center shrink-0 ${on ? 'border border-[#4fb4f0] bg-[#3d4c60]' : ''}`}><Ic s={17}>{ic}</Ic></div>
          ))}
        </div>
        <div className="ml-[124px] flex items-center">
          <Anno />
          <span className="ml-[2px] font-['DejaVu_Sans_Mono',monospace] text-[10px] text-[#8f99a5]">1:1</span>
          <span className="ml-[3px]"><Caret /></span>
          <span className="ml-[7px]"><Anno badge={<circle cx="15" cy="16" r="3.5" fill="#f2b23e" />} /></span>
          <span className="ml-[3px]"><Anno badge={<path d="M4 4 H10 M7 2 L4 4 L7 6" stroke="#c8d8e8" fill="none" />} /></span>
          <span className="ml-[1px]"><Ic><circle cx="10" cy="10" r="4.5" stroke={B} strokeWidth="2.5" /><path d="M10 2 V5 M10 15 V18 M2 10 H5 M15 10 H18 M4 4 L6 6 M14 14 L16 16 M4 16 L6 14 M14 6 L16 4" stroke={B} strokeWidth="2.5" /></Ic></span>
          <span className="ml-[1px]"><Ic><path d="M2 7 V2 H7 M13 2 H18 V7 M18 13 V18 H13 M7 18 H2 V13 M2 2 L7 7 M18 2 L13 7 M18 18 L13 13 M2 18 L7 13" /></Ic></span>
        </div>
        <svg className="absolute right-[1px] bottom-[1px]" width="12" height="12" viewBox="0 0 12 12" stroke="#c8ccd0" strokeWidth="1.2">
          <path d="M12 0 L0 12 M12 4 L4 12 M12 8 L8 12" />
        </svg>
      </div>

      {/* dymki */}
      <div className="absolute left-[197px] top-[84px] w-[135px] h-[37px] bg-white border-2 border-[#0000e6] rounded-[8px] flex items-center justify-center text-[21.5px] text-[#0000e6] [-webkit-text-stroke:0.4px_#0000e6]">
        Panel
      </div>
      <svg className="absolute left-[160px] top-[112px]" width="110" height="75" viewBox="0 0 110 75">
        <path d="M72 8 L7 71 L96 8" fill="#fff" stroke="#0000e6" strokeWidth="1" />
        <path d="M72 8.5 H95" stroke="#fff" strokeWidth="3" />
      </svg>
      <div className="absolute left-[343px] top-[145px] w-[201px] h-[69px] bg-white border-2 border-[#0000e6] rounded-[14px] flex items-center justify-center text-center text-[21.5px] leading-[24px] text-[#0000e6] [-webkit-text-stroke:0.4px_#0000e6]">
        Projekt wczytany z<br />pliku IFC.
      </div>
      <svg className="absolute left-[500px] top-[206px]" width="80" height="36" viewBox="0 0 80 36">
        <path d="M5 6 L70 29 L30 6" fill="#fff" stroke="#2a2ae6" strokeWidth="1" />
        <path d="M7 6.5 H29" stroke="#fff" strokeWidth="3" />
      </svg>
    </div>
  );
}
